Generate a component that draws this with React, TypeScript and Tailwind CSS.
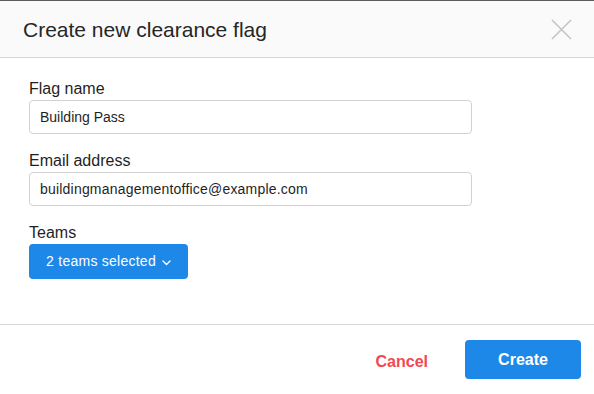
export default function App() {
  return (
    <div
      className="h-[394px] w-[594px] overflow-hidden border-t border-[#5a5a5a] bg-white text-[#222]"
      style={{ fontFamily: '"Liberation Sans", Arial, sans-serif' }}
    >
      {/* header */}
      <div className="flex h-[57px] items-center justify-between border-b border-[#d6d6d6] bg-[#fafafa] pl-[23px] pr-[22px]">
        <h1 className="mt-[1px] text-[21px] font-normal leading-none text-[#262626]">Create new clearance flag</h1>
        <svg width="21" height="21" viewBox="0 0 21 21" className="mt-[1px]">
          <path d="M1 1 L20 20 M20 1 L1 20" stroke="#c4c4c4" strokeWidth="1.6" fill="none" />
        </svg>
      </div>

      {/* body */}
      <div className="h-[267px] border-b border-[#d8d8d8] pl-[29px] pr-[122px] pt-[21px]">
        <label className="block text-[16px] leading-[20px] text-[#1f1f1f]">Flag name</label>
        <div className="mt-[1px] flex h-[34px] items-center rounded-[4px] border border-[#d2d2d2] px-[10px] text-[14px] text-[#1f1f1f]">
          Building Pass
        </div>

        <label className="mt-[17px] block text-[16px] leading-[20px] text-[#1f1f1f]">Email address</label>
        <div className="mt-[1px] flex h-[34px] items-center rounded-[4px] border border-[#d2d2d2] px-[10px] text-[14px] tracking-[0.2px] text-[#1f1f1f]">
          buildingmanagementoffice@example.com
        </div>

        <label className="mt-[17px] block text-[16px] leading-[20px] text-[#1f1f1f]">Teams</label>
        <button className="mt-[1px] flex h-[35px] w-[159px] items-center justify-center gap-[6px] rounded-[4px] bg-[#1e88e8] text-[14px] tracking-[0.25px] text-white">
          2 teams selected
          <svg width="9" height="6" viewBox="0 0 9 6" className="mt-[2px]">
            <path d="M1 1 L4.5 4.5 L8 1" stroke="white" strokeWidth="1.4" fill="none" strokeLinecap="round" strokeLinejoin="round" />
          </svg>
        </button>
      </div>

      {/* footer */}
      <div className="flex items-start justify-end gap-[37px] pr-[13px] pt-[15px]">
        <button className="mt-[10px] text-[16px] font-bold text-[#f4474f]">Cancel</button>
        <button className="h-[39px] w-[116px] rounded-[4px] bg-[#1e88e8] text-[16px] font-bold text-white">Create</button>
      </div>
    </div>
  );
}
